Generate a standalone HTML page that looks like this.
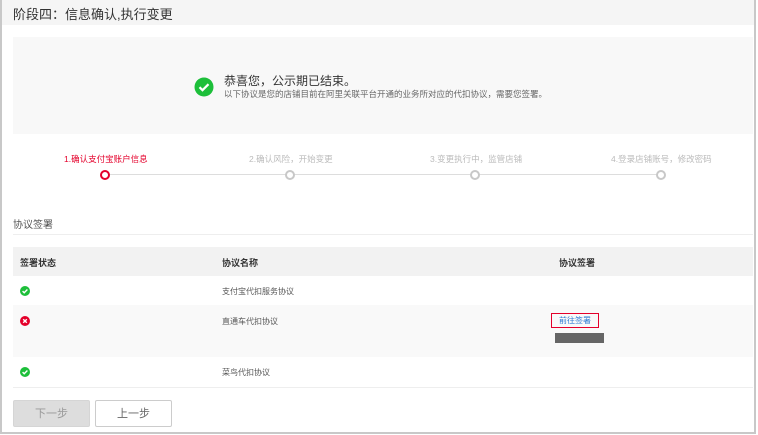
<!DOCTYPE html>
<html><head><meta charset="utf-8"><style>
*{margin:0;padding:0;box-sizing:border-box}
body{width:758px;height:435px;background:#fff;font-family:"Liberation Sans","Noto Sans CJK SC",sans-serif;position:relative;overflow:hidden}
.frame{position:absolute;left:0;top:0;width:756px;height:434px;border:2px solid #c8c8c8;border-top:none}
.a{position:absolute;white-space:nowrap}
.hdr{position:absolute;left:2px;top:0;width:752px;height:25px;background:#f5f5f5}
.note{position:absolute;left:13px;top:37px;width:740px;height:97px;background:#f8f8f8}
.c{position:absolute;width:10px;height:10px;border-radius:50%;border:2px solid #c8c8c8;background:#fff}
.row{position:absolute;left:13px;width:740px}
.btn{position:absolute;top:400px;width:77px;height:27px;font-size:11px;text-align:center;line-height:27px;border-radius:2px}
</style></head><body>
<div class="hdr"></div>
<div class="a" style="left:13px;top:4px;font-size:13px;color:#333">阶段四：信息确认,执行变更</div>
<div class="note"></div>
<svg class="a" style="left:194px;top:77px" width="20" height="20" viewBox="0 0 20 20"><circle cx="10" cy="10" r="9.5" fill="#1dbf3a"/><path d="M5.5 10.2l3 3 6-6" stroke="#fff" stroke-width="2.2" fill="none"/></svg>
<div class="a" style="left:224px;top:72px;font-size:12px;color:#333">恭喜您，公示期已结束。</div>
<div class="a" style="left:224px;top:88px;font-size:8.5px;color:#666">以下协议是您的店铺目前在阿里关联平台开通的业务所对应的代扣协议，需要您签署。</div>
<div class="a" style="left:105px;top:174px;width:556px;height:1px;background:#ddd"></div>
<div class="a" style="left:64px;top:153px;font-size:8.5px;color:#e4002b">1.确认支付宝账户信息</div>
<div class="a" style="left:249px;top:153px;font-size:8.5px;color:#bbb">2.确认风险，开始变更</div>
<div class="a" style="left:430px;top:153px;font-size:8.5px;color:#bbb">3.变更执行中，监管店铺</div>
<div class="a" style="left:611px;top:153px;font-size:8.5px;color:#bbb">4.登录店铺账号，修改密码</div>
<div class="c" style="left:100px;top:170px;border-color:#e4002b"></div>
<div class="c" style="left:285px;top:170px"></div>
<div class="c" style="left:470px;top:170px"></div>
<div class="c" style="left:656px;top:170px"></div>
<div class="a" style="left:13px;top:216px;font-size:10px;color:#555">协议签署</div>
<div class="a" style="left:13px;top:234px;width:740px;height:1px;background:#eee"></div>
<div class="row" style="top:247px;height:29px;background:#f2f2f2"></div>
<div class="row" style="top:305px;height:52px;background:#f9f9f9"></div>
<div class="row" style="top:387px;height:1px;background:#eee"></div>
<div class="a" style="left:20px;top:256px;font-size:9px;color:#333;font-weight:bold">签署状态</div>
<div class="a" style="left:222px;top:256px;font-size:9px;color:#333;font-weight:bold">协议名称</div>
<div class="a" style="left:559px;top:256px;font-size:9px;color:#333;font-weight:bold">协议签署</div>
<svg class="a" style="left:20px;top:286px" width="10" height="10" viewBox="0 0 10 10"><circle cx="5" cy="5" r="5" fill="#1dbf3a"/><path d="M2.6 5.1l1.6 1.6 3.2-3.2" stroke="#fff" stroke-width="1.4" fill="none"/></svg>
<svg class="a" style="left:20px;top:316px" width="10" height="10" viewBox="0 0 10 10"><circle cx="5" cy="5" r="5" fill="#e4002b"/><path d="M3.2 3.2l3.6 3.6M6.8 3.2l-3.6 3.6" stroke="#fff" stroke-width="1.4"/></svg>
<svg class="a" style="left:20px;top:367px" width="10" height="10" viewBox="0 0 10 10"><circle cx="5" cy="5" r="5" fill="#1dbf3a"/><path d="M2.6 5.1l1.6 1.6 3.2-3.2" stroke="#fff" stroke-width="1.4" fill="none"/></svg>
<div class="a" style="left:222px;top:286px;font-size:8px;color:#555">支付宝代扣服务协议</div>
<div class="a" style="left:222px;top:316px;font-size:8px;color:#555">直通车代扣协议</div>
<div class="a" style="left:222px;top:367px;font-size:8px;color:#555">菜鸟代扣协议</div>
<div class="a" style="left:551px;top:313px;width:48px;height:15px;border:1px solid #e4002b;font-size:8px;color:#2d7bd4;text-align:center;line-height:13px">前往签署</div>
<div class="a" style="left:555px;top:333px;width:49px;height:10px;background:#666"></div>
<div class="btn" style="left:13px;background:#ddd;color:#999;border:1px solid #d5d5d5">下一步</div>
<div class="btn" style="left:95px;background:#fff;color:#666;border:1px solid #ccc">上一步</div>
<div class="frame"></div>
</body></html>
